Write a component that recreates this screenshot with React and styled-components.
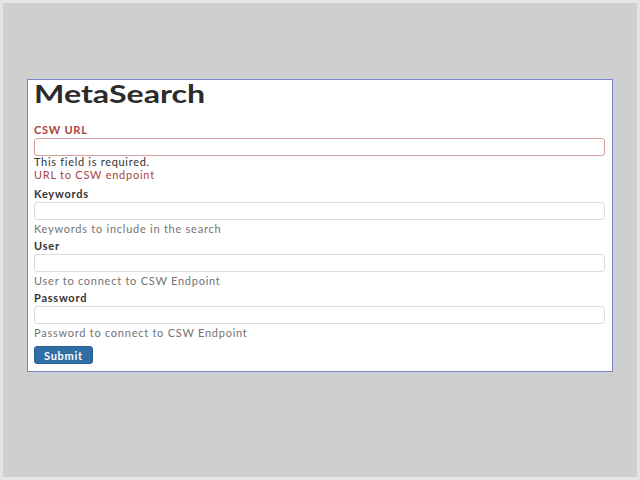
import React from 'react';
import styled, { createGlobalStyle } from 'styled-components';

const Global = createGlobalStyle`
	html, body {
		margin: 0;
		padding: 0;
		background: #e4e4e4;
	}
	body {
		font-family: Lato, "Open Sans", sans-serif;
		color: #333;
	}
`;

const Backdrop = styled.div`
	margin: 3px;
	height: 474px;
	background: #cfcfcf;
	padding: 76px 0 0 24px;
	box-sizing: border-box;
`;

const Card = styled.form`
	width: 586px;
	height: 293px;
	box-sizing: border-box;
	background: #fff;
	border: 1px solid #7b86c6;
	padding: 1px 7px 0 6px;
`;

const Title = styled.h1`
	display: inline-block;
	margin: 0 0 16px;
	font-size: 24px;
	line-height: 26px;
	font-weight: 700;
	color: #2b2b2b;
	transform: scaleX(1.34);
	transform-origin: left center;
`;

const Field = styled.div`
	margin-bottom: ${(p) => p.gap || 3}px;
`;

const Label = styled.label`
	display: block;
	font-size: 11px;
	line-height: 14px;
	font-weight: 700;
	letter-spacing: 0.75px;
	margin-bottom: 1px;
	color: ${(p) => (p.error ? '#a94442' : '#333')};
`;

const Input = styled.input`
	display: block;
	width: 100%;
	height: 18px;
	box-sizing: border-box;
	border: 1px solid ${(p) => (p.error ? '#d9a0a0' : '#dcdcdc')};
	border-radius: 3px;
	background: #fff;
	margin: 0;
	padding: 0 6px;
	font: inherit;
	font-size: 11px;
	outline: none;
`;

const Help = styled.div`
	font-size: 11px;
	line-height: 14px;
	letter-spacing: 0.75px;
	margin-top: ${(p) => (p.error ? 0 : 2)}px;
	color: ${(p) => (p.error ? '#a94442' : '#737373')};
`;

const ErrorText = styled.div`
	font-size: 11px;
	line-height: 12px;
	letter-spacing: 0.7px;
	color: #333;
`;

const Submit = styled.button`
	display: block;
	margin-top: 6px;
	height: 18px;
	padding: 0 9px;
	font-family: inherit;
	font-size: 11px;
	font-weight: 700;
	letter-spacing: 0.7px;
	color: #fff;
	background: #2f6ea5;
	border: 1px solid #285f8f;
	border-radius: 3px;
`;

const fields = [
	{ name: 'keywords', label: 'Keywords', help: 'Keywords to include in the search' },
	{ name: 'user', label: 'User', help: 'User to connect to CSW Endpoint' },
	{ name: 'password', label: 'Password', help: 'Password to connect to CSW Endpoint' },
];

export default function App() {
	return (
		<>
			<Global />
			<Backdrop>
				<Card onSubmit={(e) => e.preventDefault()}>
					<Title>MetaSearch</Title>
					<Field gap={5}>
						<Label error>CSW URL</Label>
						<Input error name="url" />
						<ErrorText>This field is required.</ErrorText>
						<Help error>URL to CSW endpoint</Help>
					</Field>
					{fields.map((f) => (
						<Field key={f.name}>
							<Label>{f.label}</Label>
							<Input name={f.name} type={f.name === 'password' ? 'password' : 'text'} />
							<Help>{f.help}</Help>
						</Field>
					))}
					<Submit type="submit">Submit</Submit>
				</Card>
			</Backdrop>
		</>
	);
}
